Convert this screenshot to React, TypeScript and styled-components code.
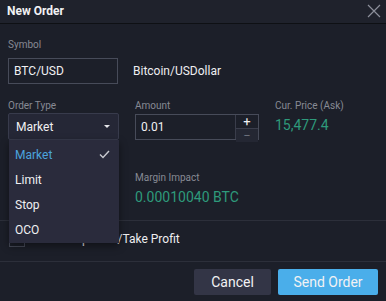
import styled, { createGlobalStyle } from 'styled-components';

const GlobalStyle = createGlobalStyle`
  html, body {
    margin: 0;
    padding: 0;
    background: #1c1f29;
  }
  * {
    box-sizing: border-box;
  }
`;

const Dialog = styled.div`
  width: 386px;
  height: 301px;
  display: flex;
  flex-direction: column;
  background: #1c1f29;
  font-family: Roboto, 'Liberation Sans', sans-serif;
  color: #e9e9ec;
  overflow: hidden;
`;

const Header = styled.div`
  height: 24px;
  flex: none;
  display: flex;
  align-items: center;
  justify-content: space-between;
  padding: 0 5px 1px 7px;
  background: #1f222c;
  border-bottom: 1px solid #0e1014;
`;

const Title = styled.h1`
  margin: 0;
  font-size: 12px;
  font-weight: 700;
  color: #f2f2f4;
`;

const CloseButton = styled.button`
  width: 14px;
  height: 14px;
  padding: 0;
  border: 0;
  background: none;
  display: flex;
  color: #8c8f9a;
`;

const Body = styled.div`
  padding: 15px 8px 0;
`;

const Label = styled.div<{ $gap?: number }>`
  font-size: 10px;
  line-height: 12px;
  color: #878a94;
  margin-bottom: ${(p) => p.$gap ?? 1}px;
`;

const SymbolRow = styled.div`
  display: flex;
  align-items: center;
  gap: 15px;
`;

const TextBox = styled.div`
  width: 110px;
  height: 26px;
  display: flex;
  align-items: center;
  padding-left: 5px;
  border: 1px solid #474b59;
  font-size: 12px;
  color: #f0f0f2;
`;

const Plain = styled.span`
  font-size: 12px;
  color: #eeeef0;
`;

const Grid = styled.div`
  display: grid;
  grid-template-columns: 111px 124px 1fr;
  column-gap: 16px;
  margin-top: 16px;
`;

const Field = styled.div`
  display: flex;
  flex-direction: column;
`;

const SelectWrap = styled.div`
  position: relative;
`;

const SelectBox = styled.div`
  height: 27px;
  display: flex;
  align-items: center;
  justify-content: space-between;
  padding: 0 8px 0 7px;
  background: #252736;
  border: 1px solid #383b4c;
  border-radius: 2px;
  font-size: 12px;
  color: #f0f0f2;
`;

const Caret = styled.span`
  width: 0;
  height: 0;
  border-left: 3px solid transparent;
  border-right: 3px solid transparent;
  border-top: 3px solid #e6e6ea;
`;

const AmountBox = styled.div`
  height: 26px;
  margin-top: 1px;
  display: flex;
  border: 1px solid #474b59;
`;

const AmountValue = styled.div`
  flex: 1;
  display: flex;
  align-items: center;
  padding-left: 5px;
  font-size: 12px;
  color: #f0f0f2;
`;

const Stepper = styled.div`
  width: 23px;
  display: flex;
  flex-direction: column;
  border-left: 1px solid #3a3d4b;
`;

const StepButton = styled.div<{ $dim?: boolean }>`
  flex: 1;
  display: flex;
  align-items: center;
  justify-content: center;
  font-size: 13px;
  line-height: 1;
  color: ${(p) => (p.$dim ? '#6c6f7b' : '#f2f2f4')};
  background: ${(p) => (p.$dim ? '#242733' : 'transparent')};
  border-top: ${(p) => (p.$dim ? '1px solid #3a3d4b' : '0')};
`;

const Value = styled.div`
  font-size: 14px;
  line-height: 18px;
  color: #2e9a7b;
  margin-top: 3px;
`;

const MarginField = styled(Field)`
  grid-column: 2 / 4;
  margin-top: 32px;
`;

const Divider = styled.div<{ $top: number }>`
  height: 1px;
  background: #2c2f3a;
  margin: ${(p) => p.$top}px -8px 0;
`;

const CheckRow = styled.div`
  display: flex;
  align-items: center;
  height: 40px;
  padding: 0 0 5px 1px;
`;

const CheckBox = styled.span`
  width: 16px;
  height: 16px;
  border: 1px solid #474b59;
`;

const CheckText = styled.span`
  font-size: 12px;
  color: #eeeef0;
  margin-left: 16px;
`;

const Footer = styled.div`
  display: flex;
  justify-content: flex-end;
  gap: 7px;
  padding-top: 7px;
`;

const Button = styled.button<{ $primary?: boolean }>`
  height: 26px;
  width: ${(p) => (p.$primary ? 100 : 77)}px;
  padding: 0;
  border: 0;
  border-radius: 2px;
  font-family: inherit;
  font-size: 14px;
  color: #f2f2f4;
  background: ${(p) => (p.$primary ? '#4aaeea' : '#333546')};
`;

const Menu = styled.ul`
  position: absolute;
  left: 1px;
  top: 100%;
  width: 110px;
  margin: 0;
  padding: 2px 0 1px;
  list-style: none;
  background: #2a2b3c;
  box-shadow: 0 3px 8px rgba(0, 0, 0, 0.45);
  z-index: 2;
`;

const MenuItem = styled.li<{ $active?: boolean }>`
  height: 25px;
  display: flex;
  align-items: center;
  justify-content: space-between;
  padding: 0 9px 0 6px;
  font-size: 12px;
  color: ${(p) => (p.$active ? '#4ba3dd' : '#f0f0f2')};
`;

const orderTypes = ['Market', 'Limit', 'Stop', 'OCO'];

export default function App() {
  return (
    <Dialog>
      <GlobalStyle />
      <Header>
        <Title>New Order</Title>
        <CloseButton>
          <svg width="14" height="14" viewBox="0 0 14 14">
            <path d="M1 1 L13 13 M13 1 L1 13" stroke="currentColor" strokeWidth="1.2" />
          </svg>
        </CloseButton>
      </Header>

      <Body>
        <Label $gap={7}>Symbol</Label>
        <SymbolRow>
          <TextBox>BTC/USD</TextBox>
          <Plain>Bitcoin/USDollar</Plain>
        </SymbolRow>

        <Grid>
          <Field>
            <Label>Order Type</Label>
            <SelectWrap>
              <SelectBox>
                Market
                <Caret />
              </SelectBox>
              <Menu>
                {orderTypes.map((t, i) => (
                  <MenuItem key={t} $active={i === 0}>
                    {t}
                    {i === 0 && (
                      <svg width="11" height="9" viewBox="0 0 11 9">
                        <path d="M1 4.5 L4 7.5 L10 1" fill="none" stroke="#c9cad0" strokeWidth="1.4" />
                      </svg>
                    )}
                  </MenuItem>
                ))}
              </Menu>
            </SelectWrap>
          </Field>
          <Field>
            <Label>Amount</Label>
            <AmountBox>
              <AmountValue>0.01</AmountValue>
              <Stepper>
                <StepButton>+</StepButton>
                <StepButton $dim>−</StepButton>
              </Stepper>
            </AmountBox>
          </Field>
          <Field>
            <Label>Cur. Price (Ask)</Label>
            <Value>15,477.4</Value>
          </Field>
          <MarginField>
            <Label>Margin Impact</Label>
            <Value>0.00010040 BTC</Value>
          </MarginField>
        </Grid>

        <Divider $top={14} />
        <CheckRow>
          <CheckBox />
          <CheckText>Use Stop Loss/Take Profit</CheckText>
        </CheckRow>
        <Divider $top={0} />

        <Footer>
          <Button>Cancel</Button>
          <Button $primary>Send Order</Button>
        </Footer>
      </Body>
    </Dialog>
  );
}
